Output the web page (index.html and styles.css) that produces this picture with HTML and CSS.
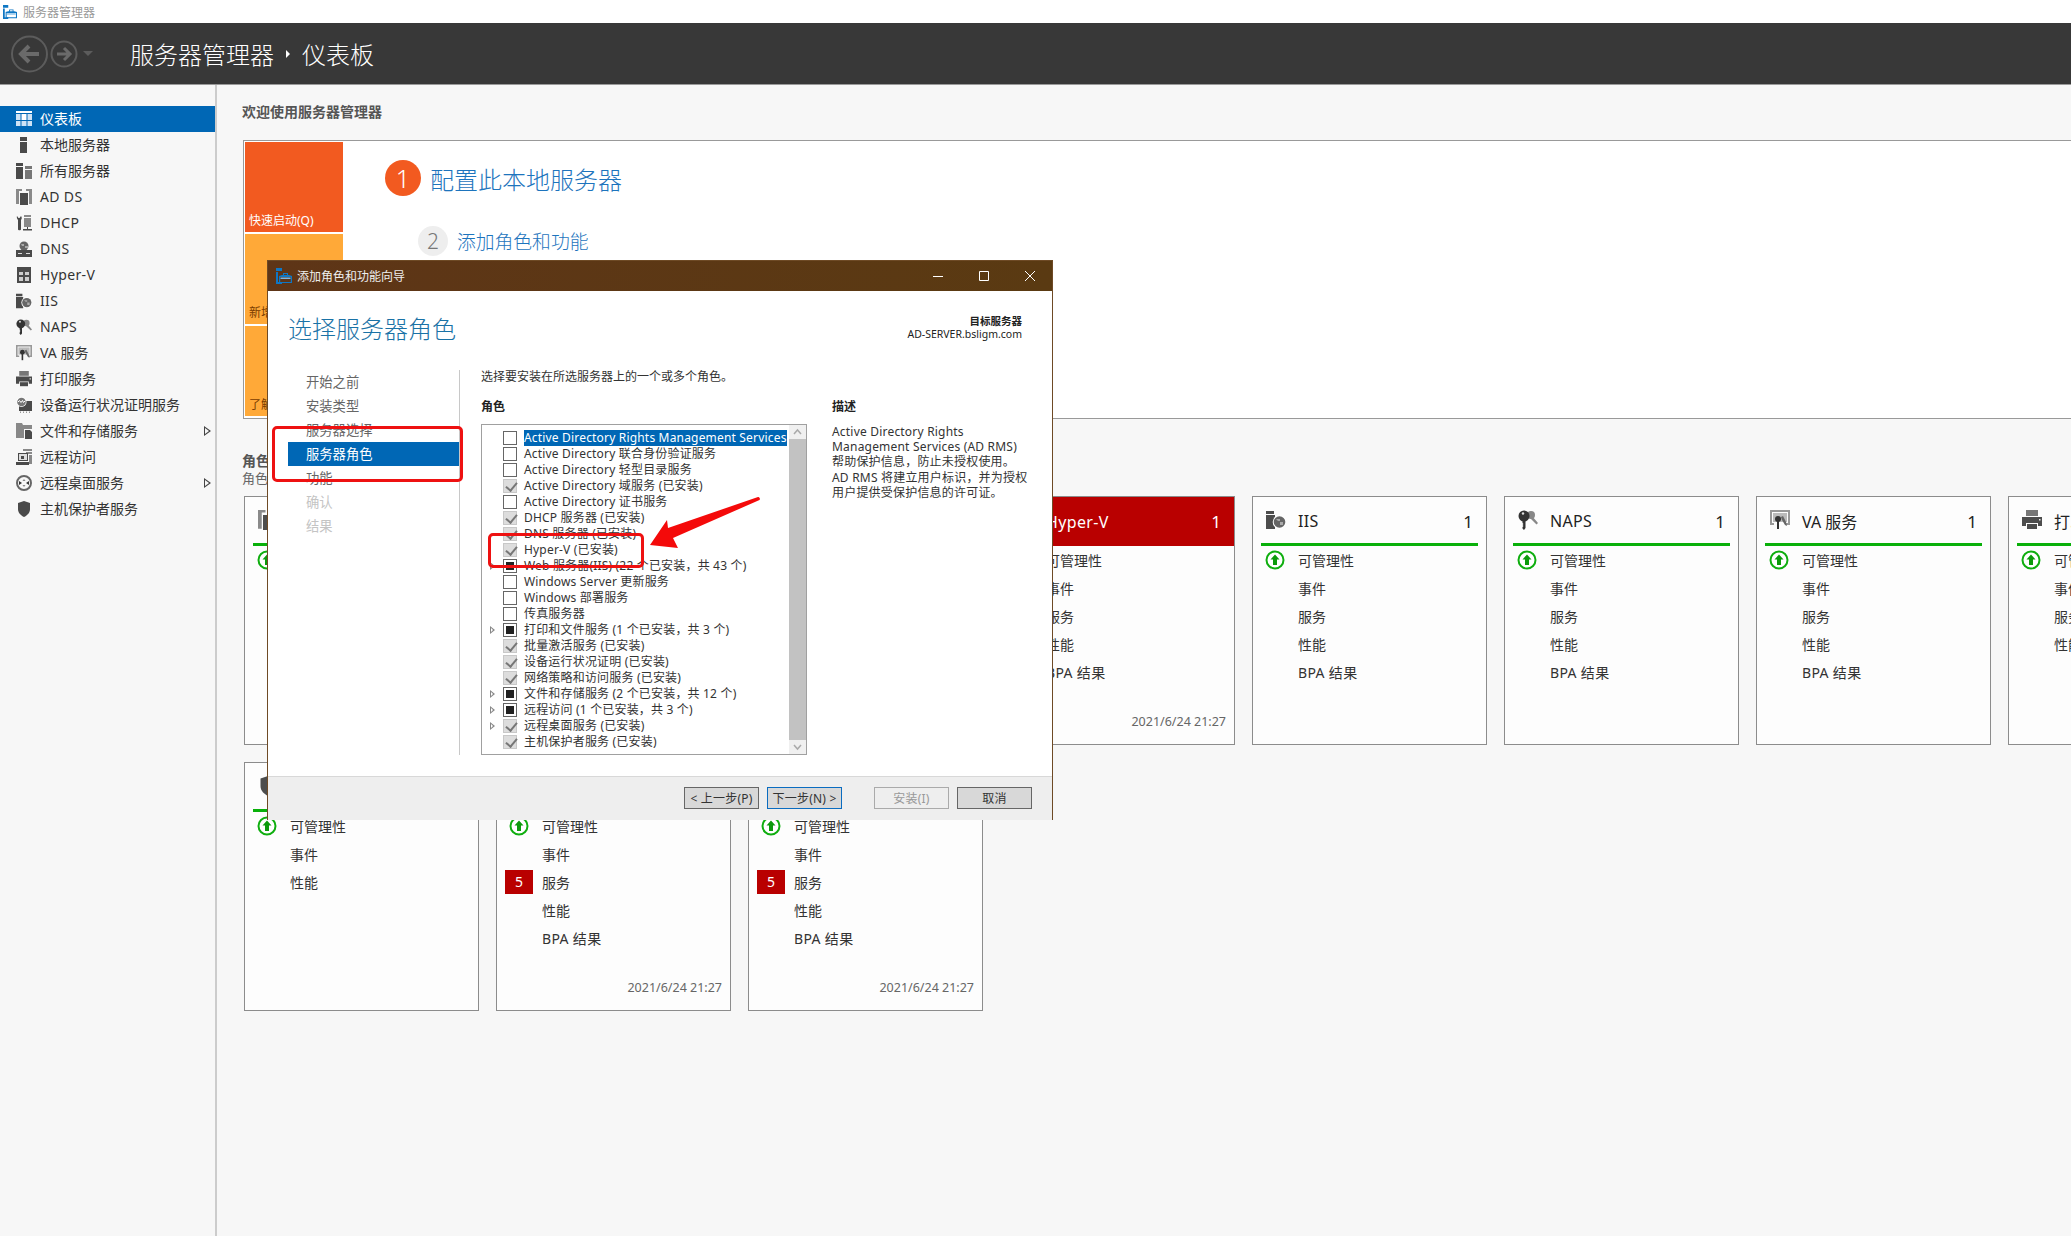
FILE: index.html
```html
<!DOCTYPE html>
<html lang="zh-CN">
<head>
  <meta charset="UTF-8">
  <title>服务器管理器</title>
  <link rel="stylesheet" href="styles.css">
</head>
<body>
<!-- 图标定义 -->
<svg class="defs" width="0" height="0">
  <defs>
    <symbol id="i-app" viewBox="0 0 16 16">
      <path fill="#0f77c4" d="M0 0h6v3H0zM0 4h2v12H0zM0 14h6v2H0z"/>
      <path fill="#0f77c4" d="M3 8l3-1h1V5h5v2h1l3 1v7H3zM8 6v1h3V6zM4.200 9v5h10.600V9z"/>
      <path fill="#7ab8e6" d="M4.500 9.500h10v1.500h-10z"/>
    </symbol>
    <symbol id="i-dash" viewBox="0 0 16 16">
      <path fill="#fff" d="M0 0h16v2H0z"/>
      <path fill="#cfe3f5" d="M0 3h4.500v6H0zM11.500 3H16v6h-4.500zM5.500 10h5v5h-5zM0 10h4.500v5H0zM11.500 10H16v5h-4.500z"/>
      <path fill="#fff" d="M5.500 3h5v6h-5z"/>
    </symbol>
    <symbol id="i-local" viewBox="0 0 16 16">
      <path d="M4 0h7v4H4zM4 5h7v11H4z"/>
    </symbol>
    <symbol id="i-all" viewBox="0 0 16 16">
      <path d="M0 0h7v3H0zM0 4h7v12H0z"/>
      <path fill="#777" d="M9 3h7v3H9zM9 7h7v9H9z"/>
    </symbol>
    <symbol id="i-adds" viewBox="0 0 16 16">
      <path fill="#8a8a8a" d="M0 1h3v14H0zM13 1h3v14h-3zM0 0h6v2H0zM10 0h6v2h-6z"/>
      <path d="M4 4h8v12H4z"/>
    </symbol>
    <symbol id="i-dhcp" viewBox="0 0 16 16">
      <path d="M1 1l1.500 2h1L5 1c1 1 1 3 0 4v9.500c0 1-3 1-3 0V5C1 4 .5 2 1 1z"/>
      <path fill="#8a8a8a" d="M8 0h7v2H8zM8 3h7v9H8z"/>
      <path d="M11 12h1v2h4v1.500H7V14h4z"/>
    </symbol>
    <symbol id="i-dns" viewBox="0 0 16 16">
      <circle cx="8" cy="5" r="4.500" fill="#666"/>
      <path fill="#aaa" d="M5 3h3v2H6zM9 5h3v2H9z"/>
      <path d="M0 9h16v7H0z"/>
      <path fill="#ddd" d="M2 12h4v1H2zM10 12h4v1h-4z"/>
    </symbol>
    <symbol id="i-hyperv" viewBox="0 0 16 16">
      <path d="M1 0h14v16H1z"/>
      <path fill="#ccc" d="M3 5h4v3H3zM9 5h4v3H9zM3 10h4v4H3zM9 10h4v4H9z"/>
    </symbol>
    <symbol id="i-iis" viewBox="0 0 20 20">
      <path d="M0 1h8v3H0zM0 5h9v14H0z"/>
      <circle cx="13.500" cy="12" r="6.800" fill="#fff"/>
      <circle cx="13.500" cy="12" r="5.800" fill="#666"/>
      <path fill="#aaa" d="M10 9h4v2h-2zM14 12h3v3h-3z"/>
    </symbol>
    <symbol id="i-naps" viewBox="0 0 20 20">
      <circle cx="13" cy="5" r="4" fill="#888"/>
      <path fill="#888" d="M14 6l6 7-1.500 1.500L12 8z"/>
      <circle cx="6" cy="6" r="5.500" fill="#333"/>
      <path fill="#333" d="M4.500 10h3v8l-1.500 2-1.500-1.500v-1.500l1-1-1-1 1-1-1-1z"/>
      <circle cx="5" cy="3.500" r="1.200" fill="#ddd"/>
    </symbol>
    <symbol id="i-va" viewBox="0 0 20 20">
      <path fill="#999" d="M0 0h20v15h-4v-2h2V2H2v11h2v2H0z"/>
      <path fill="#bbb" d="M3 3h14v9H3z"/>
      <circle cx="8" cy="9" r="3" fill="#333"/>
      <path fill="#333" d="M7 11h2v8H7z"/>
      <path fill="#666" d="M11 7l2-1 3 6 1 4-2-1-3-5z"/>
    </symbol>
    <symbol id="i-print" viewBox="0 0 20 20">
      <path fill="#777" d="M4 0h12v6H4z"/>
      <path d="M0 7h20v9h-4v-3H4v3H0z"/>
      <path d="M5 14h10v5H5z"/>
      <path fill="#eee" d="M17 9h1.500v1.500H17z"/>
    </symbol>
    <symbol id="i-health" viewBox="0 0 16 16">
      <path d="M3 4h13v10H3z"/>
      <path fill="#999" d="M4 14.500h1v1.500H4zM7 14.500h1v1.500H7zM10 14.500h1v1.500h-1zM13 14.500h1v1.500h-1z"/>
      <circle cx="5.500" cy="5" r="5" fill="#fff"/>
      <circle cx="5.500" cy="5" r="4.300" fill="#777"/>
      <path fill="none" stroke="#fff" d="M2 5l1.500-1.500L5 5.500l1.500-2 1 2 1.500-1.500"/>
    </symbol>
    <symbol id="i-files" viewBox="0 0 16 16">
      <path fill="#888" d="M0 0h6l1 2h9v4H8v9H0z"/>
      <path d="M9 7h5l2 2v7H9z"/>
    </symbol>
    <symbol id="i-remote" viewBox="0 0 16 16">
      <path fill="#888" d="M7 0h9v2H7zM10 3h6v2h-6zM13 6h3v9h-3z"/>
      <path d="M2 4h10v8H2z"/>
      <path fill="#ddd" d="M3 5h8v6H3z"/>
      <path d="M5 7h3v3H5zM0 13h13v3H0z"/>
    </symbol>
    <symbol id="i-rds" viewBox="0 0 16 16">
      <circle cx="8" cy="8" r="7" fill="none" stroke="#666" stroke-width="2"/>
      <path fill="#333" d="M3 6l3 2-3 2zM13 6l-3 2 3 2z"/>
      <path fill="#888" d="M8 4l1.500 2h-3zM8 12l-1.500-2h3z"/>
    </symbol>
    <symbol id="i-shield" viewBox="0 0 16 16">
      <path d="M8 0l6 2v6c0 4-3 6.500-6 8-3-1.500-6-4-6-8V2z"/>
    </symbol>
    <symbol id="i-up" viewBox="0 0 20 20">
      <circle cx="10" cy="10" r="8.500" fill="#fff" stroke="#0fae0f" stroke-width="2"/>
      <path fill="#0b9a0b" d="M10 4.500l4.500 5H12V15H8V9.500H5.500z"/>
    </symbol>
  </defs>
</svg>

<div class="titlebar">
  <svg class="titlebar-icon"><use href="#i-app"/></svg>
  <span>服务器管理器</span>
</div>

<header class="header">
  <svg class="nav-arrows" width="78" height="40" viewBox="0 0 78 40">
    <circle cx="18.500" cy="20" r="17.500" fill="none" stroke="#5c5c5c" stroke-width="2"/>
    <path d="M28 20H12M18 12l-8 8 8 8" fill="none" stroke="#6a6a6a" stroke-width="4"/>
    <circle cx="53" cy="20" r="12.500" fill="none" stroke="#5c5c5c" stroke-width="2"/>
    <path d="M46 20h12M53 14l6 6-6 6" fill="none" stroke="#6a6a6a" stroke-width="3"/>
    <path d="M72 17h10l-5 5z" fill="#5c5c5c"/>
  </svg>
  <span class="crumb">服务器管理器</span>
  <span class="crumb-sep"></span>
  <span class="crumb">仪表板</span>
</header>

<div class="shell">
  <nav class="sidebar">
    <div class="side-item active"><svg class="side-icon"><use href="#i-dash"/></svg>仪表板</div>
    <div class="side-item"><svg class="side-icon"><use href="#i-local"/></svg>本地服务器</div>
    <div class="side-item"><svg class="side-icon"><use href="#i-all"/></svg>所有服务器</div>
    <div class="side-item lat"><svg class="side-icon"><use href="#i-adds"/></svg>AD DS</div>
    <div class="side-item lat"><svg class="side-icon"><use href="#i-dhcp"/></svg>DHCP</div>
    <div class="side-item lat"><svg class="side-icon"><use href="#i-dns"/></svg>DNS</div>
    <div class="side-item lat"><svg class="side-icon"><use href="#i-hyperv"/></svg>Hyper-V</div>
    <div class="side-item lat"><svg class="side-icon"><use href="#i-iis"/></svg>IIS</div>
    <div class="side-item lat"><svg class="side-icon"><use href="#i-naps"/></svg>NAPS</div>
    <div class="side-item"><svg class="side-icon"><use href="#i-va"/></svg>VA 服务</div>
    <div class="side-item"><svg class="side-icon"><use href="#i-print"/></svg>打印服务</div>
    <div class="side-item"><svg class="side-icon"><use href="#i-health"/></svg>设备运行状况证明服务</div>
    <div class="side-item more"><svg class="side-icon"><use href="#i-files"/></svg>文件和存储服务</div>
    <div class="side-item"><svg class="side-icon"><use href="#i-remote"/></svg>远程访问</div>
    <div class="side-item more"><svg class="side-icon"><use href="#i-rds"/></svg>远程桌面服务</div>
    <div class="side-item"><svg class="side-icon"><use href="#i-shield"/></svg>主机保护者服务</div>
  </nav>

  <main class="main">
    <div class="welcome">欢迎使用服务器管理器</div>

    <section class="quick">
      <div class="tiles">
        <div class="tile tile-orange">快速启动(Q)</div>
        <div class="tile tile-yellow">新增功能(W)</div>
        <div class="tile tile-yellow">了解详细信息(L)</div>
      </div>
      <div class="steps">
        <div class="step-main"><span class="step-num">1</span>配置此本地服务器</div>
        <div class="step-sub"><span class="step-num">2</span>添加角色和功能</div>
      </div>
    </section>

    <div class="roles-title">角色和服务器组</div>
    <div class="roles-sub">角色: 13 | 服务器组: 1 | 服务器总数: 1</div>

    <section class="cards">
      <div class="card">
        <div class="card-head"><svg class="card-icon"><use href="#i-adds"/></svg><span class="card-name">AD DS</span><span class="card-count">1</span></div>
        <div class="card-row"><span class="status"><svg class="up"><use href="#i-up"/></svg></span>可管理性</div>
      </div>
      <div class="card"></div>
      <div class="card"></div>
      <div class="card alert">
        <div class="card-head"><svg class="card-icon"><use href="#i-hyperv"/></svg><span class="card-name lat">Hyper-V</span><span class="card-count">1</span></div>
        <div class="card-row"><span class="status"></span>可管理性</div>
        <div class="card-row"><span class="status"></span>事件</div>
        <div class="card-row"><span class="status"></span>服务</div>
        <div class="card-row"><span class="status"></span>性能</div>
        <div class="card-row lat"><span class="status"></span>BPA 结果</div>
        <div class="card-date">2021/6/24 21:27</div>
      </div>
      <div class="card">
        <div class="card-head"><svg class="card-icon"><use href="#i-iis"/></svg><span class="card-name lat">IIS</span><span class="card-count">1</span></div>
        <div class="card-row"><span class="status"><svg class="up"><use href="#i-up"/></svg></span>可管理性</div>
        <div class="card-row"><span class="status"></span>事件</div>
        <div class="card-row"><span class="status"></span>服务</div>
        <div class="card-row"><span class="status"></span>性能</div>
        <div class="card-row lat"><span class="status"></span>BPA 结果</div>
      </div>
      <div class="card">
        <div class="card-head"><svg class="card-icon"><use href="#i-naps"/></svg><span class="card-name lat">NAPS</span><span class="card-count">1</span></div>
        <div class="card-row"><span class="status"><svg class="up"><use href="#i-up"/></svg></span>可管理性</div>
        <div class="card-row"><span class="status"></span>事件</div>
        <div class="card-row"><span class="status"></span>服务</div>
        <div class="card-row"><span class="status"></span>性能</div>
        <div class="card-row lat"><span class="status"></span>BPA 结果</div>
      </div>
      <div class="card">
        <div class="card-head"><svg class="card-icon"><use href="#i-va"/></svg><span class="card-name">VA 服务</span><span class="card-count">1</span></div>
        <div class="card-row"><span class="status"><svg class="up"><use href="#i-up"/></svg></span>可管理性</div>
        <div class="card-row"><span class="status"></span>事件</div>
        <div class="card-row"><span class="status"></span>服务</div>
        <div class="card-row"><span class="status"></span>性能</div>
        <div class="card-row lat"><span class="status"></span>BPA 结果</div>
      </div>
      <div class="card">
        <div class="card-head"><svg class="card-icon"><use href="#i-print"/></svg><span class="card-name">打印服务</span><span class="card-count">1</span></div>
        <div class="card-row"><span class="status"><svg class="up"><use href="#i-up"/></svg></span>可管理性</div>
        <div class="card-row"><span class="status"></span>事件</div>
        <div class="card-row"><span class="status"></span>服务</div>
        <div class="card-row"><span class="status"></span>性能</div>
      </div>

      <!-- 第二行 -->
      <div class="card">
        <div class="card-head"><svg class="card-icon"><use href="#i-shield"/></svg><span class="card-name">主机保护者服务</span><span class="card-count">1</span></div>
        <div class="card-row"><span class="status"><svg class="up"><use href="#i-up"/></svg></span>可管理性</div>
        <div class="card-row"><span class="status"></span>事件</div>
        <div class="card-row"><span class="status"></span>性能</div>
      </div>
      <div class="card">
        <div class="card-head"></div>
        <div class="card-row"><span class="status"><svg class="up"><use href="#i-up"/></svg></span>可管理性</div>
        <div class="card-row"><span class="status"></span>事件</div>
        <div class="card-row"><span class="status"><span class="tile-num">5</span></span>服务</div>
        <div class="card-row"><span class="status"></span>性能</div>
        <div class="card-row lat"><span class="status"></span>BPA 结果</div>
        <div class="card-date">2021/6/24 21:27</div>
      </div>
      <div class="card">
        <div class="card-head"></div>
        <div class="card-row"><span class="status"><svg class="up"><use href="#i-up"/></svg></span>可管理性</div>
        <div class="card-row"><span class="status"></span>事件</div>
        <div class="card-row"><span class="status"><span class="tile-num">5</span></span>服务</div>
        <div class="card-row"><span class="status"></span>性能</div>
        <div class="card-row lat"><span class="status"></span>BPA 结果</div>
        <div class="card-date">2021/6/24 21:27</div>
      </div>
    </section>
  </main>
</div>

<!-- 向导窗口 -->
<div class="wizard">
  <div class="wiz-title">
    <svg class="wiz-app"><use href="#i-app"/></svg>
    <span>添加角色和功能向导</span>
    <div class="wiz-controls">
      <svg width="12" height="12" viewBox="0 0 12 12"><path d="M1 6.500h10" stroke="#fff"/></svg>
      <svg width="12" height="12" viewBox="0 0 12 12"><path d="M1.500 1.500h9v9h-9z" fill="none" stroke="#fff"/></svg>
      <svg width="12" height="12" viewBox="0 0 12 12"><path d="M1 1l10 10M11 1L1 11" stroke="#fff"/></svg>
    </div>
  </div>

  <div class="wiz-head">
    <h1>选择服务器角色</h1>
    <div class="target"><b>目标服务器</b><br>AD-SERVER.bsligm.com</div>
  </div>

  <div class="wiz-body">
    <div class="wiz-nav">
      <div class="wiz-step">开始之前</div>
      <div class="wiz-step">安装类型</div>
      <div class="wiz-step">服务器选择</div>
      <div class="wiz-step current">服务器角色</div>
      <div class="wiz-step">功能</div>
      <div class="wiz-step off">确认</div>
      <div class="wiz-step off">结果</div>
    </div>

    <div class="wiz-pane">
      <div class="intro">选择要安装在所选服务器上的一个或多个角色。</div>
      <div class="pane-cols">
        <div>
          <div class="pane-label">角色</div>
          <div class="rolebox">
            <div class="rolelist">
              <div class="role"><i class="tw"></i><i class="cb"></i><span class="selected">Active Directory Rights Management Services</span></div>
              <div class="role"><i class="tw"></i><i class="cb"></i><span>Active Directory 联合身份验证服务</span></div>
              <div class="role"><i class="tw"></i><i class="cb"></i><span>Active Directory 轻型目录服务</span></div>
              <div class="role"><i class="tw"></i><i class="cb on"></i><span>Active Directory 域服务 (已安装)</span></div>
              <div class="role"><i class="tw"></i><i class="cb"></i><span>Active Directory 证书服务</span></div>
              <div class="role"><i class="tw"></i><i class="cb on"></i><span>DHCP 服务器 (已安装)</span></div>
              <div class="role"><i class="tw"></i><i class="cb on"></i><span>DNS 服务器 (已安装)</span></div>
              <div class="role"><i class="tw"></i><i class="cb on"></i><span>Hyper-V (已安装)</span></div>
              <div class="role"><i class="tw open"></i><i class="cb part"></i><span>Web 服务器(IIS) (22 个已安装，共 43 个)</span></div>
              <div class="role"><i class="tw"></i><i class="cb"></i><span>Windows Server 更新服务</span></div>
              <div class="role"><i class="tw"></i><i class="cb"></i><span>Windows 部署服务</span></div>
              <div class="role"><i class="tw"></i><i class="cb"></i><span>传真服务器</span></div>
              <div class="role"><i class="tw open"></i><i class="cb part"></i><span>打印和文件服务 (1 个已安装，共 3 个)</span></div>
              <div class="role"><i class="tw"></i><i class="cb on"></i><span>批量激活服务 (已安装)</span></div>
              <div class="role"><i class="tw"></i><i class="cb on"></i><span>设备运行状况证明 (已安装)</span></div>
              <div class="role"><i class="tw"></i><i class="cb on"></i><span>网络策略和访问服务 (已安装)</span></div>
              <div class="role"><i class="tw open"></i><i class="cb part"></i><span>文件和存储服务 (2 个已安装，共 12 个)</span></div>
              <div class="role"><i class="tw open"></i><i class="cb part"></i><span>远程访问 (1 个已安装，共 3 个)</span></div>
              <div class="role"><i class="tw open"></i><i class="cb on"></i><span>远程桌面服务 (已安装)</span></div>
              <div class="role"><i class="tw"></i><i class="cb on"></i><span>主机保护者服务 (已安装)</span></div>
            </div>
            <div class="scrollbar">
              <svg class="sb-btn" viewBox="0 0 17 14"><path d="M5 9l3.500-4L12 9" fill="none" stroke="#aaa" stroke-width="1.500"/></svg>
              <div class="sb-thumb"></div>
              <svg class="sb-btn" viewBox="0 0 17 14"><path d="M5 5l3.500 4L12 5" fill="none" stroke="#aaa" stroke-width="1.500"/></svg>
            </div>
          </div>
        </div>
        <div class="desc">
          <div class="pane-label">描述</div>
          <p>Active Directory Rights<br>Management Services (AD RMS)<br>帮助保护信息，防止未授权使用。<br>AD RMS 将建立用户标识，并为授权<br>用户提供受保护信息的许可证。</p>
        </div>
      </div>
    </div>
  </div>

  <div class="wiz-foot">
    <button class="btn">&lt; 上一步(P)</button>
    <button class="btn primary">下一步(N) &gt;</button>
    <button class="btn disabled gap-left">安装(I)</button>
    <button class="btn">取消</button>
  </div>
</div>

<!-- 红色标注 -->
<div class="mark mark-nav"></div>
<div class="mark mark-role"></div>
<svg class="mark-arrow" width="120" height="60" viewBox="0 0 120 60">
  <path fill="#f40a0a" d="M2 50L19 25 20 33 110 2c1.500-.5 2.500 2 1.500 3L25 43l5 10z"/>
</svg>
</body>
</html>
```

FILE: styles.css
```css
* {
  box-sizing: border-box;
}
html, body {
  margin: 0;
  height: 100%;
}
body {
  width: 2071px;
  height: 1236px;
  overflow: hidden;
  background-color: #f7f7f7;
  color: #2b2b2b;
  font-family: "Noto Sans", "Noto Sans CJK SC", sans-serif;
  font-size: 14px;
}
.defs {
  display: block;
  height: 0;
}
.lat {
  letter-spacing: .35px;
}

/* 顶部 */
.titlebar {
  display: flex;
  align-items: center;
  height: 23px;
  padding-left: 3px;
  background-color: #fff;
  color: #999;
  font-size: 12px;
}
.titlebar-icon {
  width: 14px;
  height: 14px;
  margin-right: 6px;
}
.header {
  display: flex;
  align-items: center;
  height: 62px;
  padding-left: 11px;
  background-color: #383838;
  border-bottom: 1px solid #9a9a9a;
  color: #fff;
}
.nav-arrows {
  margin-right: 41px;
  overflow: visible;
}
.crumb {
  font-size: 24px;
  font-weight: 300;
}
.crumb-sep {
  width: 0;
  height: 0;
  margin: 0 12px;
  border-left: 4px solid #fff;
  border-top: 4px solid transparent;
  border-bottom: 4px solid transparent;
}

/* 左侧导航 */
.shell {
  display: flex;
  height: 1151px;
}
.sidebar {
  flex: none;
  width: 217px;
  padding-top: 21px;
  background-color: #f7f7f7;
  border-right: 2px solid #ccc;
}
.side-item {
  position: relative;
  display: flex;
  align-items: center;
  width: 215px;
  height: 26px;
  padding-left: 16px;
  padding-bottom: 2px;
  font-size: 14px;
  color: #333;
}
.side-item.active {
  background-color: #0067b5;
  color: #fff;
}
.side-item.more::before,
.side-item.more::after {
  content: "";
  position: absolute;
  width: 0;
  height: 0;
  border-style: solid;
  border-color: transparent;
}
.side-item.more::before {
  right: 4px;
  top: 8px;
  border-width: 5px 0 5px 7px;
  border-left-color: #444;
}
.side-item.more::after {
  right: 6px;
  top: 10px;
  border-width: 3px 0 3px 4px;
  border-left-color: #f7f7f7;
}
.side-icon {
  flex: none;
  width: 16px;
  height: 16px;
  margin-right: 8px;
  margin-top: 2px;
  color: #4a4a4a;
  fill: currentColor;
}

/* 主区域 */
.main {
  flex: 1;
  min-width: 0;
  padding: 17px 0 0 25px;
  overflow: hidden;
}
.welcome {
  height: 20px;
  line-height: 20px;
  font-size: 14px;
  font-weight: 700;
  color: #555;
}
.quick {
  display: flex;
  height: 279px;
  margin-top: 18px;
  margin-left: 1px;
  background-color: #fff;
  border: 1px solid #999;
  border-right: 0;
}
.tiles {
  display: flex;
  flex-direction: column;
  gap: 2px;
  width: 100px;
  padding: 1px 0 0 1px;
}
.tile {
  display: flex;
  align-items: flex-end;
  width: 98px;
  height: 90px;
  padding: 0 0 3px 4px;
  font-size: 12px;
  white-space: nowrap;
}
.tile-orange {
  background-color: #f25a20;
  color: #fff;
}
.tile-yellow {
  background-color: #ffa938;
  color: #7a3c00;
}
.steps {
  padding-left: 41px;
  color: #1d74bd;
}
.step-main {
  display: flex;
  align-items: center;
  gap: 9px;
  margin-top: 19px;
  font-size: 24px;
  font-weight: 300;
}
.step-main .step-num {
  display: flex;
  align-items: center;
  justify-content: center;
  width: 36px;
  height: 36px;
  border-radius: 50%;
  background-color: #f25a20;
  color: #fff;
  font-size: 25px;
}
.step-sub {
  display: flex;
  align-items: center;
  gap: 9px;
  margin-top: 30px;
  margin-left: 33px;
  font-size: 18.800px;
  font-weight: 300;
}
.step-sub .step-num {
  display: flex;
  align-items: center;
  justify-content: center;
  width: 30px;
  height: 30px;
  border-radius: 50%;
  background-color: #eee;
  color: #777;
  font-size: 21px;
}
.roles-title {
  height: 18px;
  margin-top: 33px;
  line-height: 18px;
  font-size: 14px;
  font-weight: 700;
  color: #555;
}
.roles-sub {
  height: 17px;
  line-height: 17px;
  font-size: 13px;
  color: #666;
  white-space: nowrap;
}

/* 卡片 */
.cards {
  display: grid;
  grid-template-columns: repeat(8, 235px);
  grid-auto-rows: 249px;
  gap: 17px;
  margin-top: 9px;
  margin-left: 2px;
}
.card {
  display: flex;
  flex-direction: column;
  background-color: #fdfdfd;
  border: 1px solid #8c8c8c;
}
.card-head {
  flex: none;
  display: flex;
  align-items: center;
  height: 49px;
  margin: 0 8px;
  padding: 2px 5px 0;
  border-bottom: 3px solid #09b00a;
}
.card-icon {
  flex: none;
  width: 20px;
  height: 20px;
  margin-right: 12px;
  margin-bottom: 2px;
  color: #4d4d4d;
  fill: currentColor;
}
.card-name {
  flex: 1;
  font-size: 16px;
  color: #222;
  white-space: nowrap;
}
.card-count {
  font-size: 17px;
  color: #222;
}
.card-row {
  flex: none;
  display: flex;
  align-items: center;
  height: 28px;
  padding-left: 8px;
  font-size: 14px;
  color: #333;
}
.status {
  flex: none;
  display: flex;
  align-items: center;
  justify-content: center;
  width: 28px;
  margin-right: 9px;
}
.up {
  width: 20px;
  height: 20px;
}
.tile-num {
  display: block;
  width: 28px;
  height: 24px;
  line-height: 24px;
  background-color: #b90000;
  color: #fff;
  text-align: center;
}
.card-date {
  margin-top: auto;
  padding: 0 8px 13px 0;
  line-height: 18px;
  font-size: 12.500px;
  color: #666;
  text-align: right;
}
.alert .card-head {
  margin: 0;
  padding: 0 13px;
  background-color: #b90000;
  border-bottom: 0;
  color: #fff;
}
.alert .card-name,
.alert .card-count {
  color: #fff;
}

/* 向导窗口 */
.wizard {
  position: absolute;
  left: 267px;
  top: 260px;
  display: flex;
  flex-direction: column;
  width: 786px;
  height: 560px;
  background-color: #fff;
  border: 1px solid #6e4a25;
  color: #333;
  font-size: 12px;
}
.wiz-title {
  flex: none;
  display: flex;
  align-items: center;
  height: 30px;
  padding-left: 8px;
  background: linear-gradient(to right, #5e3517, #5a3a12);
  color: #eee;
  font-size: 12px;
}
.wiz-app {
  width: 16px;
  height: 16px;
  margin-right: 5px;
}
.wiz-controls {
  display: flex;
  gap: 34px;
  margin-left: auto;
  margin-right: 16px;
}
.wiz-head {
  flex: none;
  display: flex;
  justify-content: space-between;
  height: 79px;
  padding: 21px 30px 0 20px;
}
.wiz-head h1 {
  margin: 0;
  font-size: 24px;
  font-weight: 300;
  line-height: 34px;
  color: #1a72a6;
}
.target {
  padding-top: 3px;
  font-size: 10.500px;
  line-height: 13px;
  text-align: right;
  color: #222;
}
.wiz-body {
  flex: none;
  display: flex;
  height: 385px;
}
.wiz-nav {
  flex: none;
  width: 172px;
  margin-left: 20px;
  border-right: 1px solid #c8c8c8;
}
.wiz-step {
  height: 24px;
  line-height: 24px;
  padding-left: 18px;
  font-size: 13.300px;
  color: #666;
}
.wiz-step.current {
  width: 171px;
  background-color: #0067b5;
  color: #fff;
}
.wiz-step.off {
  color: #c4c4c4;
}
.wiz-pane {
  flex: 1;
  padding-left: 21px;
}
.intro {
  height: 13px;
  line-height: 13px;
  font-size: 12px;
}
.pane-cols {
  display: flex;
  gap: 25px;
  margin-top: 17px;
}
.pane-label {
  height: 14px;
  margin-bottom: 10px;
  line-height: 14px;
  font-size: 12px;
  font-weight: 700;
  color: #222;
}
.rolebox {
  display: flex;
  width: 326px;
  height: 331px;
  border: 1px solid #a0a0a0;
}
.rolelist {
  flex: 1;
  min-width: 0;
  padding-top: 5px;
}
.role {
  display: flex;
  align-items: center;
  height: 16px;
  padding-left: 8px;
  font-size: 12px;
  line-height: 16px;
  letter-spacing: .18px;
  color: #333;
  white-space: nowrap;
}
.role .selected {
  background-color: #0067b5;
  color: #fff;
}
.tw {
  flex: none;
  position: relative;
  width: 13px;
  height: 8px;
}
.tw.open::before,
.tw.open::after {
  content: "";
  position: absolute;
  width: 0;
  height: 0;
  border-style: solid;
  border-color: transparent;
}
.tw.open::before {
  left: 0;
  top: 0;
  border-width: 4px 0 4px 5px;
  border-left-color: #888;
}
.tw.open::after {
  left: 1px;
  top: 2px;
  border-width: 2px 0 2px 2.500px;
  border-left-color: #fff;
}
.cb {
  flex: none;
  position: relative;
  width: 14px;
  height: 14px;
  margin-right: 7px;
  background-color: #fff;
  border: 1px solid #666;
}
.cb.on {
  background-color: #ddd;
  border-color: #c8c8c8;
}
.cb.on::before {
  content: "";
  position: absolute;
  left: 4px;
  top: 0;
  width: 5px;
  height: 9px;
  border-right: 2px solid #777;
  border-bottom: 2px solid #777;
  transform: rotate(40deg);
}
.cb.part::before {
  content: "";
  position: absolute;
  left: 2px;
  top: 2px;
  width: 8px;
  height: 8px;
  background-color: #222;
}
.scrollbar {
  flex: none;
  display: flex;
  flex-direction: column;
  width: 17px;
  background-color: #f0f0f0;
}
.sb-btn {
  flex: none;
  width: 17px;
  height: 14px;
}
.sb-thumb {
  flex: 1;
  background-color: #c2c2c2;
}
.desc p {
  margin: 1px 0 0;
  width: 200px;
  font-size: 12px;
  line-height: 15.200px;
  letter-spacing: .2px;
  white-space: nowrap;
}
.wiz-foot {
  flex: none;
  display: flex;
  justify-content: flex-end;
  gap: 8px;
  height: 44px;
  margin-top: 21px;
  padding: 10px 20px 0 0;
  background-color: #eee;
  border-top: 1px solid #d8d8d8;
}
.btn {
  width: 75px;
  height: 22px;
  padding: 0;
  background-color: #d8d8d8;
  border: 1px solid #666;
  font-family: inherit;
  font-size: 12px;
  letter-spacing: .2px;
  color: #333;
}
.btn.primary {
  border-color: #0a6cc0;
}
.btn.disabled {
  background-color: #eee;
  border-color: #aaa;
  color: #999;
}
.gap-left {
  margin-left: 24px;
}

/* 红色标注 */
.mark {
  position: absolute;
  border: 3px solid #ee1111;
  border-radius: 5px;
}
.mark-nav {
  left: 272px;
  top: 426px;
  width: 191px;
  height: 56px;
}
.mark-role {
  left: 488px;
  top: 533px;
  width: 156px;
  height: 35px;
}
.mark-arrow {
  position: absolute;
  left: 648px;
  top: 495px;
}
```
